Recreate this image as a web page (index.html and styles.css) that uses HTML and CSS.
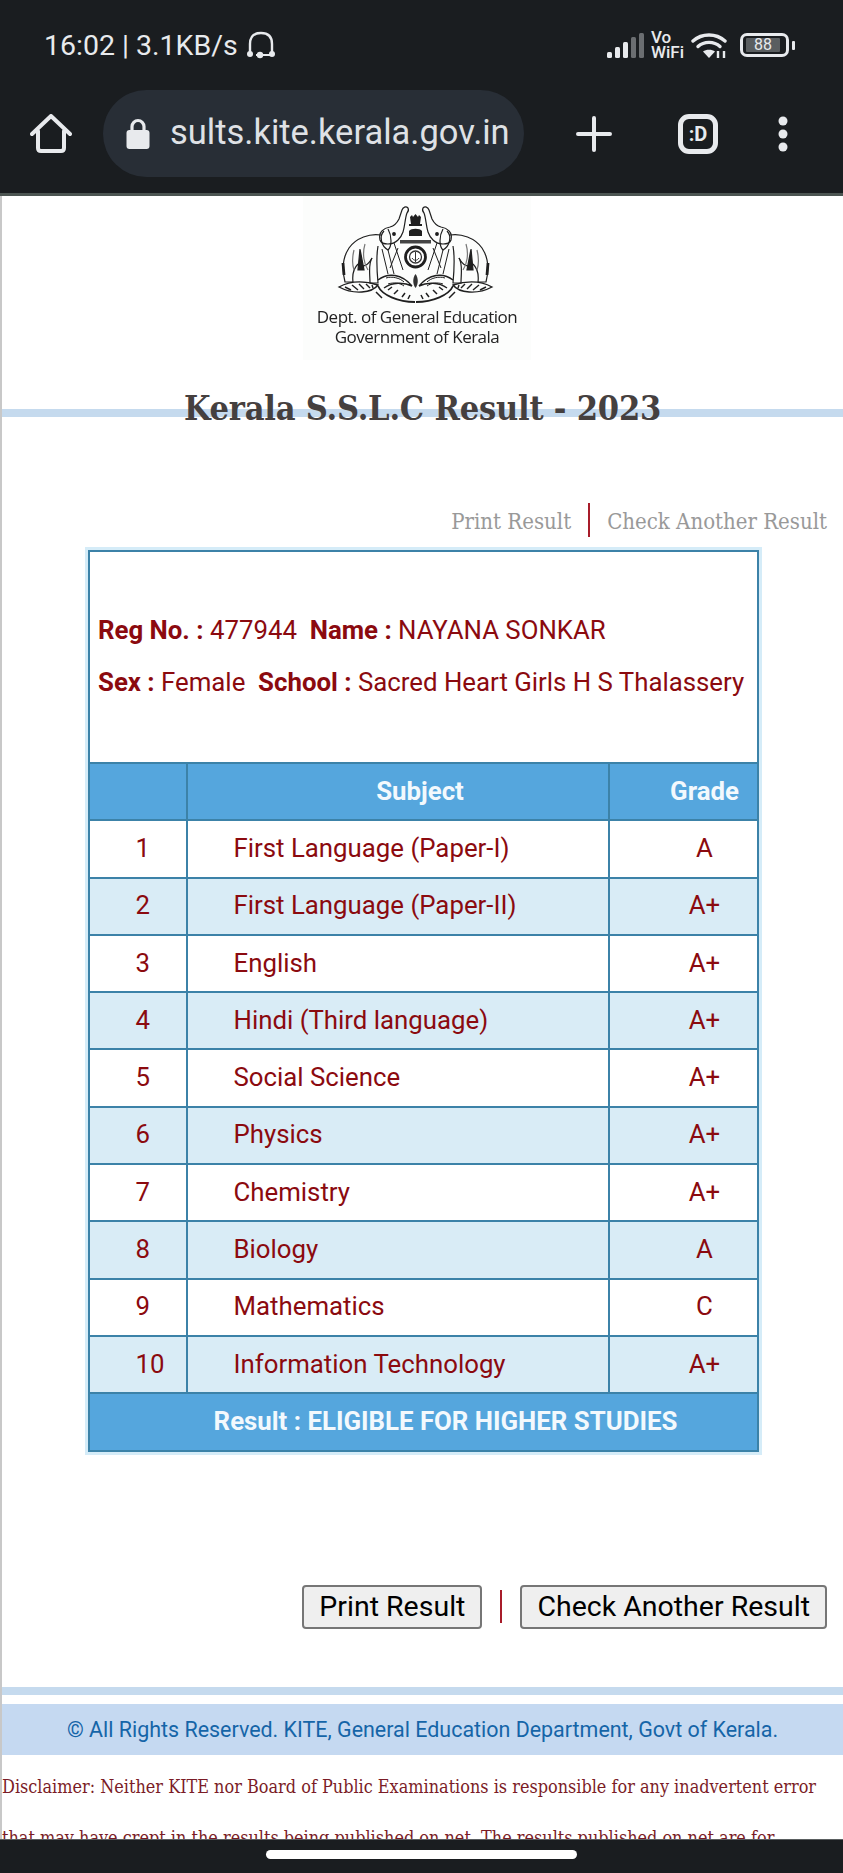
FILE: index.html
```html
<!DOCTYPE html>
<html lang="en">
<head>
  <meta charset="UTF-8" />
  <title>Kerala S.S.L.C Result - 2023</title>
  <link rel="stylesheet" href="styles.css">
</head>
<body>

<header class="chrome">
  <div class="status">
    <div class="status-left">
      <span class="clock">16:02 | 3.1KB/s</span>
      <svg class="headset" width="28" height="28" viewBox="0 0 28 28">
        <path d="M3 23V13C3 6 7 2 14 2s11 4 11 11v10" fill="none" stroke="#e8eaed" stroke-width="2.4"/>
        <path d="M9 24h16" fill="none" stroke="#e8eaed" stroke-width="2"/>
        <circle cx="3" cy="23" r="3" fill="#e8eaed"/>
        <circle cx="13" cy="24" r="3.2" fill="#e8eaed"/>
        <circle cx="25" cy="23" r="3" fill="#e8eaed"/>
      </svg>
    </div>
    <div class="status-right">
      <svg width="38" height="25" viewBox="0 0 38 25">
        <rect x="0" y="19" width="5" height="6" rx="1.5" fill="#e8eaed"/>
        <rect x="8" y="14" width="5" height="11" rx="1.5" fill="#e8eaed"/>
        <rect x="16" y="9" width="5" height="16" rx="1.5" fill="#e8eaed"/>
        <rect x="24" y="4" width="5" height="21" rx="1.5" fill="#6b6e71"/>
        <rect x="32" y="0" width="5" height="25" rx="1.5" fill="#6b6e71"/>
      </svg>
      <span class="vowifi">Vo<br>WiFi</span>
      <svg class="wifi" width="36" height="27" viewBox="0 0 36 27">
        <path d="M2 9C11 1 25 1 34 9" fill="none" stroke="#e8eaed" stroke-width="3.4" stroke-linecap="round"/>
        <path d="M7 14.5C13 9 23 9 29 14.5" fill="none" stroke="#e8eaed" stroke-width="3.4" stroke-linecap="round"/>
        <path d="M12 19.5C15 17 21 17 24 19.5L18 26Z" fill="#e8eaed"/>
        <path d="M27 19v7M33 19v7" stroke="#e8eaed" stroke-width="2.4"/>
      </svg>
      <div class="battery">
        <div class="battery-body"><span class="battery-level">88</span></div>
        <div class="battery-nub"></div>
      </div>
    </div>
  </div>

  <div class="toolbar">
    <svg class="home" width="42" height="40" viewBox="0 0 42 40">
      <path d="M2 20L21 2l19 18M8 17v17c0 2 1 3 3 3h20c2 0 3-1 3-3V17" fill="none" stroke="#e8eaed" stroke-width="4" stroke-linecap="round" stroke-linejoin="round"/>
    </svg>
    <div class="urlbar">
      <svg width="24" height="31" viewBox="0 0 24 31">
        <path d="M6 13V8.5a6 6 0 0 1 12 0V13" fill="none" stroke="#e8eaed" stroke-width="3.2"/>
        <rect x="0.5" y="12" width="23" height="19" rx="3" fill="#e8eaed"/>
      </svg>
      <span class="url">sults.kite.kerala.gov.in</span>
    </div>
    <svg class="plus" width="36" height="36" viewBox="0 0 36 36">
      <path d="M2 18h32M18 2v32" stroke="#e8eaed" stroke-width="4" stroke-linecap="round"/>
    </svg>
    <div class="tabs">:D</div>
    <svg class="menu" width="10" height="36" viewBox="0 0 10 36">
      <circle cx="5" cy="5" r="4.5" fill="#e8eaed"/>
      <circle cx="5" cy="18" r="4.5" fill="#e8eaed"/>
      <circle cx="5" cy="31" r="4.5" fill="#e8eaed"/>
    </svg>
  </div>
</header>

<main class="page">
  <div class="logo">
    <svg class="emblem" width="170" height="110" viewBox="0 0 170 110">
      <defs>
        <g id="half" fill="none" stroke="#1f1f1f" stroke-width="1.2">
          <!-- elephant body and legs -->
          <path d="M49 33C38 31 24 36 17 46C11 55 10 68 13 80h8C20 72 22 66 26 62"/>
          <path d="M46 44C44 55 45 70 46 81h-8C38 72 36 62 40 56"/>
          <path d="M26 62C30 66 36 64 40 56"/>
          <path d="M33 42C30 52 32 62 36 68M22 48C20 56 20 62 22 68" stroke="#777"/>
          <path d="M28 47L26 68L32 68Z" fill="#1f1f1f"/>
          <path d="M11 61L12 73" stroke-width="2.8"/>
          <!-- head, raised trunk, ear -->
          <path d="M48 38C46 30 52 26 58 25C62 24 65 21 67 17L70 8C71 5 74 4 76 6C77 8 76 10 75 11C73 16 73 24 71 30C69 36 64 42 56 42C52 42 49 41 48 38Z"/>
          <path d="M52 29C47 34 49 44 56 48C60 44 60 34 56 27"/>
          <circle cx="62" cy="32" r="1.3" fill="#1f1f1f"/>
          <!-- supports towards the shield -->
          <path d="M56 48L62 72M62 41L71 68M50 47L56 72M66 46L58 66" stroke-width="1"/>
          <!-- scroll under the feet -->
          <path d="M7 85C16 80 30 78 46 83C40 91 22 93 7 85Z" stroke-width="1.4"/>
          <path d="M13 85l6 3M20 83l6 5M27 82l5 5M34 82l4 4M40 83l1 3" stroke-width="1.4"/>
          <!-- conch scrolls below the shield -->
          <path d="M46 78C56 70 70 72 80 84C72 80 60 80 52 86" stroke-width="1.4"/>
          <path d="M54 76C60 74 68 76 72 80M56 82C62 80 68 81 72 84" stroke-width="1"/>
          <path d="M46 84C50 93 66 100 83 100" stroke-width="1.8"/>
          <path d="M56 88l4-3M62 92l4-4M70 95l3-4M76 97l2-4M44 90l6 6" stroke-width="1.5"/>
        </g>
      </defs>
      <use href="#half"/>
      <use href="#half" transform="translate(167 0) scale(-1 1)"/>
      <!-- Ashoka capital, banner and centre shield -->
      <path d="M78 15l2-2 1 2 2.5-3 2.5 3 1-2 2 2-1 7h2v2H77v-2h2Z" fill="#1f1f1f"/>
      <path d="M77 29c2-3 11-3 13 0v5H77Z" fill="#1f1f1f"/>
      <path d="M68 38h31v3.5H68Z" fill="#444"/>
      <circle cx="83.5" cy="55" r="10" fill="#fff" stroke="#1f1f1f" stroke-width="2.8"/>
      <circle cx="83.5" cy="55" r="6" fill="none" stroke="#333" stroke-width="1.3"/>
      <path d="M83.5 50v10M80 56c2 3 5 3 7 0" fill="none" stroke="#333"/>
      <path d="M83.5 72c3 4 3 10 0 14c-3-4-3-10 0-14Z" fill="#333"/>
    </svg>
    <p class="logo-text">Dept. of General Education<br>Government of Kerala</p>
  </div>

  <div class="title-band">
    <h1>Kerala S.S.L.C Result - 2023</h1>
  </div>

  <div class="links">
    <a href="#">Print Result</a>
    <span class="links-sep"></span>
    <a href="#">Check Another Result</a>
  </div>

  <table class="result">
    <colgroup>
      <col class="col-no">
      <col>
      <col class="col-grade">
    </colgroup>
    <tr class="info">
      <td colspan="3">
        <div><b>Reg No. :</b> 477944&nbsp; <b>Name :</b> NAYANA SONKAR</div>
        <div><b>Sex :</b> Female&nbsp; <b>School :</b> Sacred Heart Girls H S Thalassery</div>
      </td>
    </tr>
    <tr class="head">
      <td></td>
      <td class="center">Subject</td>
      <td class="grade">Grade</td>
    </tr>
    <tr><td>1</td><td>First Language (Paper-I)</td><td class="grade">A</td></tr>
    <tr><td>2</td><td>First Language (Paper-II)</td><td class="grade">A+</td></tr>
    <tr><td>3</td><td>English</td><td class="grade">A+</td></tr>
    <tr><td>4</td><td>Hindi (Third language)</td><td class="grade">A+</td></tr>
    <tr><td>5</td><td>Social Science</td><td class="grade">A+</td></tr>
    <tr><td>6</td><td>Physics</td><td class="grade">A+</td></tr>
    <tr><td>7</td><td>Chemistry</td><td class="grade">A+</td></tr>
    <tr><td>8</td><td>Biology</td><td class="grade">A</td></tr>
    <tr><td>9</td><td>Mathematics</td><td class="grade">C</td></tr>
    <tr><td>10</td><td>Information Technology</td><td class="grade">A+</td></tr>
    <tr class="head">
      <td colspan="3" class="center">Result : ELIGIBLE FOR HIGHER STUDIES</td>
    </tr>
  </table>

  <div class="actions">
    <button>Print Result</button>
    <span class="actions-sep"></span>
    <button>Check Another Result</button>
  </div>

  <div class="footer-band"></div>
  <div class="copyright">© All Rights Reserved. KITE, General Education Department, Govt of Kerala.</div>
  <p class="disclaimer">Disclaimer: Neither KITE nor Board of Public Examinations is responsible for any inadvertent error that may have crept in the results being published on net. The results published on net are for immediate information only.</p>
</main>

<footer class="navbar">
  <div class="home-pill"></div>
</footer>

</body>
</html>
```

FILE: styles.css
```css
* {
  box-sizing: border-box;
}

html, body {
  margin: 0;
  height: 100%;
}

body {
  display: flex;
  flex-direction: column;
  height: 1873px;
  overflow: hidden;
  background: #fff;
  font-family: Roboto, sans-serif;
}

/* Browser header */
.chrome {
  background: #1a1d20;
  color: #e8eaed;
  height: 196px;
  flex: none;
  border-bottom: 3px solid #4c5552;
}

.status {
  height: 90px;
  display: flex;
  justify-content: space-between;
  align-items: center;
  padding: 0 48px 0 44px;
}

.status-left, .status-right {
  display: flex;
  align-items: center;
}

.clock {
  font-size: 28.5px;
}

.headset {
  margin-left: 9px;
}

.vowifi {
  font-size: 17px;
  line-height: 15px;
  font-weight: 500;
  margin-left: 6px;
}

.wifi {
  margin-left: 7px;
}

.battery {
  display: flex;
  align-items: center;
  margin-left: 13px;
}

.battery-body {
  width: 49px;
  height: 24px;
  border: 3px solid #e8eaed;
  border-radius: 7px;
  padding: 2px 6px 2px 3px;
  display: flex;
}

.battery-level {
  flex: 1;
  background: #5a5e60;
  border-radius: 1px;
  font-size: 16px;
  line-height: 14px;
  text-align: center;
}

.battery-nub {
  width: 3px;
  height: 9px;
  margin-left: 3px;
  background: #e8eaed;
  border-radius: 1px;
}

.toolbar {
  display: flex;
  align-items: center;
  height: 87px;
  padding-left: 30px;
}

.urlbar {
  flex: none;
  width: 421px;
  height: 87px;
  margin-left: 31px;
  padding-left: 23px;
  border-radius: 44px;
  background: #282e36;
  display: flex;
  align-items: center;
  overflow: hidden;
}

.url {
  margin-left: 20px;
  padding-bottom: 3px;
  font-size: 34.5px;
  color: #dfe1e5;
  white-space: nowrap;
}

.plus {
  margin-left: 52px;
}

.tabs {
  width: 40px;
  height: 40px;
  margin-left: 66px;
  border: 5px solid #e8eaed;
  border-radius: 11px;
  font-size: 20px;
  font-weight: 700;
  line-height: 30px;
  text-align: center;
}

.menu {
  margin-left: 60px;
}

/* Page */
.page {
  flex: 1;
  min-height: 0;
  overflow: hidden;
  border-left: 2px solid #c8c8c8;
}

.logo {
  height: 164px;
  width: 228px;
  margin-left: 301px;
  background: #fcfdfc;
  display: flex;
  flex-direction: column;
  align-items: center;
}

.emblem {
  flex: none;
  margin-top: 6px;
  filter: blur(0.4px);
}

.logo-text {
  margin: -5px 0 0;
  font-family: "Open Sans", sans-serif;
  font-size: 17px;
  line-height: 20px;
  letter-spacing: -0.5px;
  text-align: center;
  color: #222;
  filter: blur(0.3px);
}

.title-band {
  margin-top: 18px;
  height: 60px;
  background: linear-gradient(#c5daee, #c5daee) 0 31px / 100% 8px no-repeat;
}

h1 {
  margin: 0;
  font-family: "DejaVu Serif", serif;
  font-stretch: condensed;
  font-size: 34px;
  line-height: 60px;
  letter-spacing: -0.2px;
  font-weight: 700;
  text-align: center;
  color: #45403f;
}

.links {
  margin-top: 65px;
  height: 34px;
  padding-right: 16px;
  display: flex;
  justify-content: flex-end;
  align-items: center;
  font-family: "DejaVu Serif", serif;
  font-stretch: condensed;
  font-size: 22px;
}

.links a {
  padding-top: 2px;
  color: #999;
  text-decoration: none;
}

.links-sep {
  width: 2px;
  height: 34px;
  margin: 0 17px;
  background: #a81c2a;
}

/* Result table */
.result {
  width: 671px;
  margin: 13px 0 0 86px;
  border-collapse: collapse;
  table-layout: fixed;
  font-size: 25.8px;
  color: #8b0a0f;
  box-shadow: 0 0 0 3px #d5ecf8;
}

.col-no {
  width: 98px;
}

.col-grade {
  width: 149px;
}

.result td {
  height: 57.3px;
  padding: 0 0 2px 45.5px;
  border: 2px solid #3c82a8;
}

.result tr:nth-child(even) td {
  background: #d9ecf6;
}

.result tr.info td {
  height: 212px;
  padding: 52px 0 0 8px;
  background: #fff;
  vertical-align: top;
}

.info div {
  line-height: 52px;
}

.result tr.head td {
  background: #55a6dd;
  color: #f3f9fd;
  font-weight: 700;
}

.result td.center {
  text-align: center;
  padding-left: 44px;
}

.result td.grade {
  text-align: center;
  padding-left: 42px;
}

/* Buttons and footer */
.actions {
  margin-top: 133px;
  padding-right: 16px;
  height: 44px;
  display: flex;
  justify-content: flex-end;
  align-items: center;
}

.actions button {
  height: 44px;
  padding: 0 15px;
  font-family: Roboto, sans-serif;
  font-size: 28.5px;
  color: #000;
  background: #efefef;
  border: 2px solid #767676;
  border-radius: 4px;
}

.actions-sep {
  width: 2px;
  height: 33px;
  margin: 0 18px;
  background: #a81c2a;
}

.footer-band {
  margin-top: 58px;
  height: 8px;
  background: #c5daee;
}

.copyright {
  margin-top: 9px;
  height: 51px;
  line-height: 51px;
  text-align: center;
  font-size: 21.45px;
  color: #1565a8;
  background: #c5d9f1;
}

.disclaimer {
  margin: 6px 0 0;
  font-family: "DejaVu Serif", serif;
  font-stretch: condensed;
  font-size: 17.9px;
  line-height: 51px;
  color: #7b1c26;
}

/* Gesture bar */
.navbar {
  height: 34px;
  flex: none;
  background: #1a1d20;
  border-top: 1px solid #5a5e60;
  display: flex;
  justify-content: center;
  padding-top: 10px;
}

.home-pill {
  width: 311px;
  height: 9px;
  border-radius: 5px;
  background: #fff;
  margin-right: 1px;
}
```
